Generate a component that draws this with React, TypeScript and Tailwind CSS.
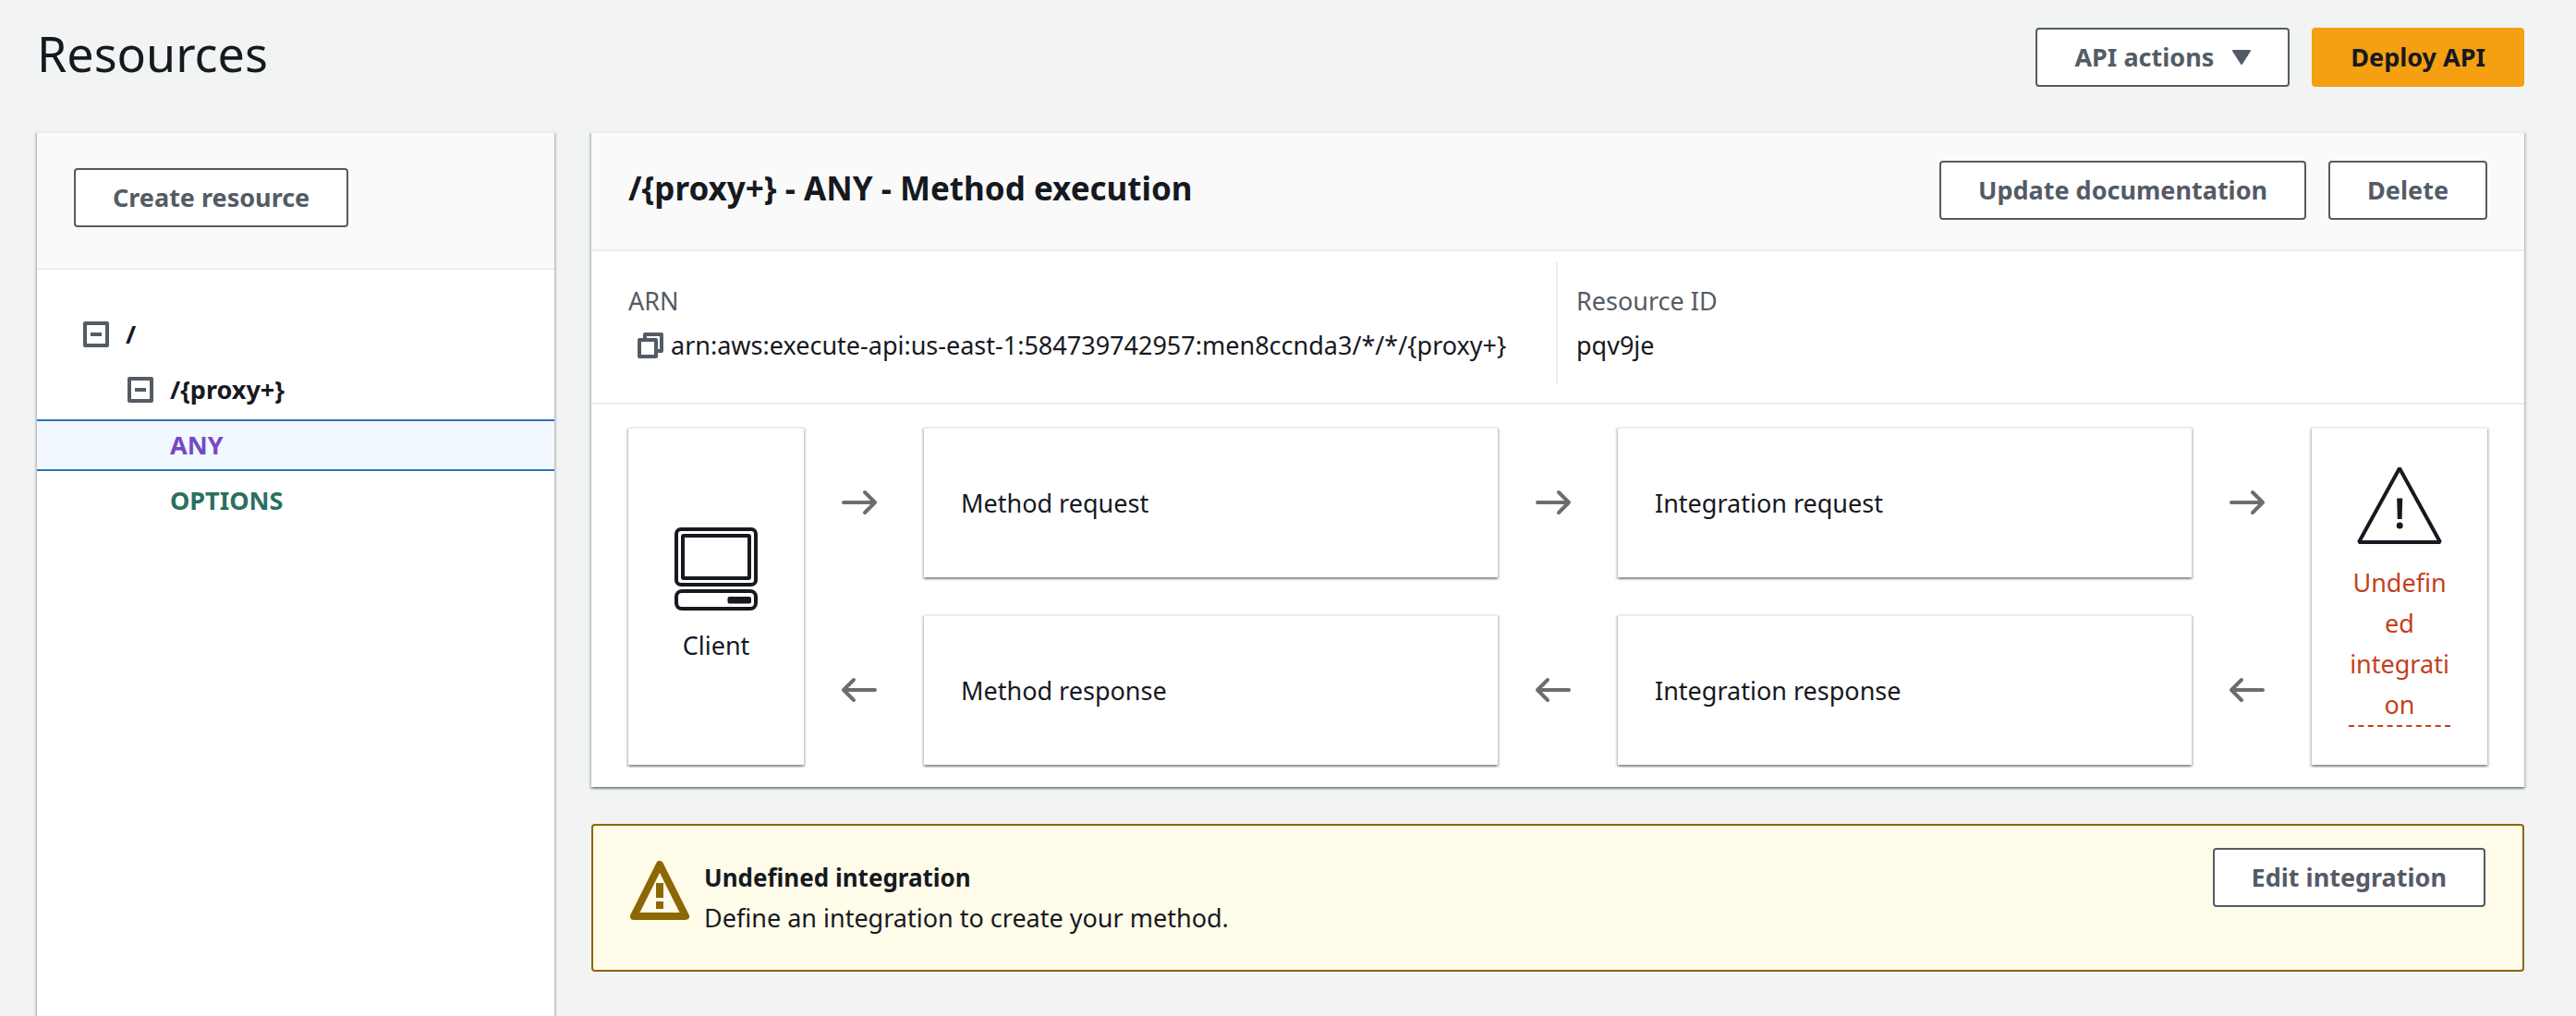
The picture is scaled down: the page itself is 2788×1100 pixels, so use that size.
import type { ButtonHTMLAttributes, ReactNode } from 'react';
import { clsx } from 'clsx';

const panelShadow =
  'shadow-[0_2px_2px_0_rgba(0,28,36,0.3),2px_2px_2px_0_rgba(0,28,36,0.15),-2px_2px_2px_0_rgba(0,28,36,0.15)]';

function Button({ primary, children, ...rest }: { primary?: boolean } & ButtonHTMLAttributes<HTMLButtonElement>) {
  return (
    <button
      type="button"
      className={clsx(
        'flex h-16 shrink-0 items-center rounded-sm border-2 px-10 font-bold whitespace-nowrap',
        primary ? 'border-[#f59f12] bg-[#f59f12] text-[#16191f]' : 'border-[#545b64] bg-white text-[#545b64]',
      )}
      {...rest}
    >
      {children}
    </button>
  );
}

function Card({ className, children }: { className?: string; children: ReactNode }) {
  return <div className={clsx('border-t-2 border-[#eaeded] bg-white', panelShadow, className)}>{children}</div>;
}

function CollapseToggle({ label }: { label: string }) {
  return (
    <button type="button" aria-label={label} className="shrink-0 text-[#545b64]">
      <svg width="28" height="28" viewBox="0 0 28 28" fill="none" stroke="currentColor" strokeWidth="4" strokeLinejoin="round">
        <path d="M2 2h24v24H2zM8 14h12" />
      </svg>
    </button>
  );
}

function CopyIcon() {
  return (
    <svg width="28" height="28" viewBox="0 0 28 28" fill="none" stroke="currentColor" strokeWidth="4" strokeLinejoin="round">
      <path d="M2 8h18v18H2z" />
      <path d="M8 8V2h18v18h-6" />
    </svg>
  );
}

function ComputerIcon() {
  return (
    <svg width="90" height="90" viewBox="0 0 90 90" fill="none" stroke="#16191f" strokeWidth="4">
      <rect x="2" y="2" width="86" height="60" rx="5" />
      <rect x="9" y="9" width="72" height="46" rx="1" />
      <rect x="2" y="69" width="86" height="19" rx="6" />
      <rect x="57.5" y="75" width="25.5" height="7.5" rx="2" fill="#16191f" stroke="none" />
    </svg>
  );
}

function OutlineWarningIcon() {
  return (
    <svg width="92" height="84" viewBox="0 0 92 84" fill="none" stroke="#16191f" strokeWidth="4" strokeLinejoin="bevel">
      <path d="M46 2 90 82H2Z" />
      <path d="M43.200 34.500h6l-.6 22.500h-4.800z" fill="#16191f" stroke="none" />
      <circle cx="46.200" cy="64" r="3.500" fill="#16191f" stroke="none" />
    </svg>
  );
}

function AlertIcon() {
  return (
    <svg width="64" height="64" viewBox="0 0 64 64" fill="none" stroke="#8d6605" strokeWidth="8" strokeLinejoin="round">
      <path d="M32 4 60 60H4Z" />
      <path d="M32 24v16M32 44v8" />
    </svg>
  );
}

function Arrow({ back }: { back?: boolean }) {
  return (
    <div className="flex items-center pl-10">
      <svg
        width="40"
        height="28"
        viewBox="0 0 40 28"
        fill="none"
        stroke="#6c6d70"
        strokeWidth="4"
        strokeLinecap="round"
        strokeLinejoin="round"
      >
        <path d={back ? 'M37 14H3M14 3 3 14l11 11' : 'M3 14h34M26 3l11 11-11 11'} />
      </svg>
    </div>
  );
}

function Step({ children }: { children: ReactNode }) {
  return <Card className="flex items-center px-10">{children}</Card>;
}

function ResourceTree() {
  return (
    <ul className="flex flex-col gap-1 pt-[42px] font-bold">
      <li className="flex h-14 items-center gap-[18px] pl-[50px]">
        <CollapseToggle label="Collapse /" />
        <span>/</span>
      </li>
      <li className="flex h-14 items-center gap-[18px] pl-[98px]">
        <CollapseToggle label="Collapse /{proxy+}" />
        <span>{'/{proxy+}'}</span>
      </li>
      <li className="flex h-14 items-center border-y-2 border-[#2e73b8] bg-[#f1f8ff] pl-36">
        <a href="#any" aria-current="true" className="text-[#7748c2]">ANY</a>
      </li>
      <li className="flex h-14 items-center pl-36">
        <a href="#options" className="text-[#2b6f62]">OPTIONS</a>
      </li>
    </ul>
  );
}

export default function App() {
  return (
    <div className="flex min-h-screen flex-col bg-[#f2f3f3] px-10 pr-14 font-['Noto_Sans',sans-serif] text-[27px] leading-[44px] text-[#16191f]">
      <header className="mb-12 flex items-start justify-between pt-[30px]">
        <h1 className="text-[52px] leading-[56px]">Resources</h1>
        <div className="flex gap-6">
          <Button aria-haspopup="menu">
            API actions
            <svg className="ml-5" width="20" height="16" viewBox="0 0 20 16" fill="currentColor" stroke="currentColor" strokeWidth="2" strokeLinejoin="round">
              <path d="M1 1h18l-9 14z" />
            </svg>
          </Button>
          <Button primary>Deploy API</Button>
        </div>
      </header>

      <div className="flex flex-1 items-stretch gap-10">
        <aside className={clsx('w-[560px] shrink-0 border-t-2 border-[#eaeded] bg-white', panelShadow)}>
          <div className="flex border-b-2 border-[#eaeded] bg-[#fafafa] px-10 pt-[38px] pb-11">
            <Button>Create resource</Button>
          </div>
          <ResourceTree />
        </aside>

        <main className="flex min-w-0 flex-1 flex-col gap-10">
          <Card>
            <div className="flex items-start gap-6 border-b-2 border-[#eaeded] bg-[#fafafa] px-10 pt-[30px] pb-8">
              <h2 className="flex-1 text-[35px] leading-[60px] font-bold">{'/{proxy+} - ANY - Method execution'}</h2>
              <Button>Update documentation</Button>
              <Button>Delete</Button>
            </div>

            <dl className="grid grid-cols-2 border-b-2 border-[#eaeded] px-10 pt-3 pb-5">
              <div className="flex flex-col gap-1 border-r-2 border-[#eaeded] py-5">
                <dt className="text-[#545b64]">ARN</dt>
                <dd className="flex items-center gap-2 pl-[10px]">
                  <button type="button" aria-label="Copy ARN" className="text-[#545b64]">
                    <CopyIcon />
                  </button>
                  {'arn:aws:execute-api:us-east-1:584739742957:men8ccnda3/*/*/{proxy+}'}
                </dd>
              </div>
              <div className="flex flex-col gap-1 py-5 pl-5">
                <dt className="text-[#545b64]">Resource ID</dt>
                <dd>pqv9je</dd>
              </div>
            </dl>

            <div className="grid grid-cols-[190px_130px_1fr_130px_1fr_130px_190px] grid-rows-[163px_163px] gap-y-10 px-10 py-6">
              <Card className="row-span-2 flex flex-col items-center justify-center gap-4">
                <ComputerIcon />
                Client
              </Card>
              <Arrow />
              <Step>Method request</Step>
              <Arrow />
              <Step>Integration request</Step>
              <Arrow />
              <Card className="row-span-2 flex flex-col items-center justify-center gap-5">
                <OutlineWarningIcon />
                <button type="button" className="w-[110px] border-b-2 border-dashed border-[#c5401a] wrap-break-word text-[#c5401a]">
                  Undefined integration
                </button>
              </Card>
              <Arrow back />
              <Step>Method response</Step>
              <Arrow back />
              <Step>Integration response</Step>
              <Arrow back />
            </div>
          </Card>

          <section className="flex items-start gap-4 rounded-sm border-2 border-[#8d6605] bg-[#fffce9] pt-6 pr-10 pb-[34px] pl-10">
            <div className="mt-[14px] shrink-0">
              <AlertIcon />
            </div>
            <div className="mt-[10px] flex-1">
              <h3 className="text-[26px] font-bold">Undefined integration</h3>
              <p>Define an integration to create your method.</p>
            </div>
            <Button>Edit integration</Button>
          </section>
        </main>
      </div>
    </div>
  );
}
